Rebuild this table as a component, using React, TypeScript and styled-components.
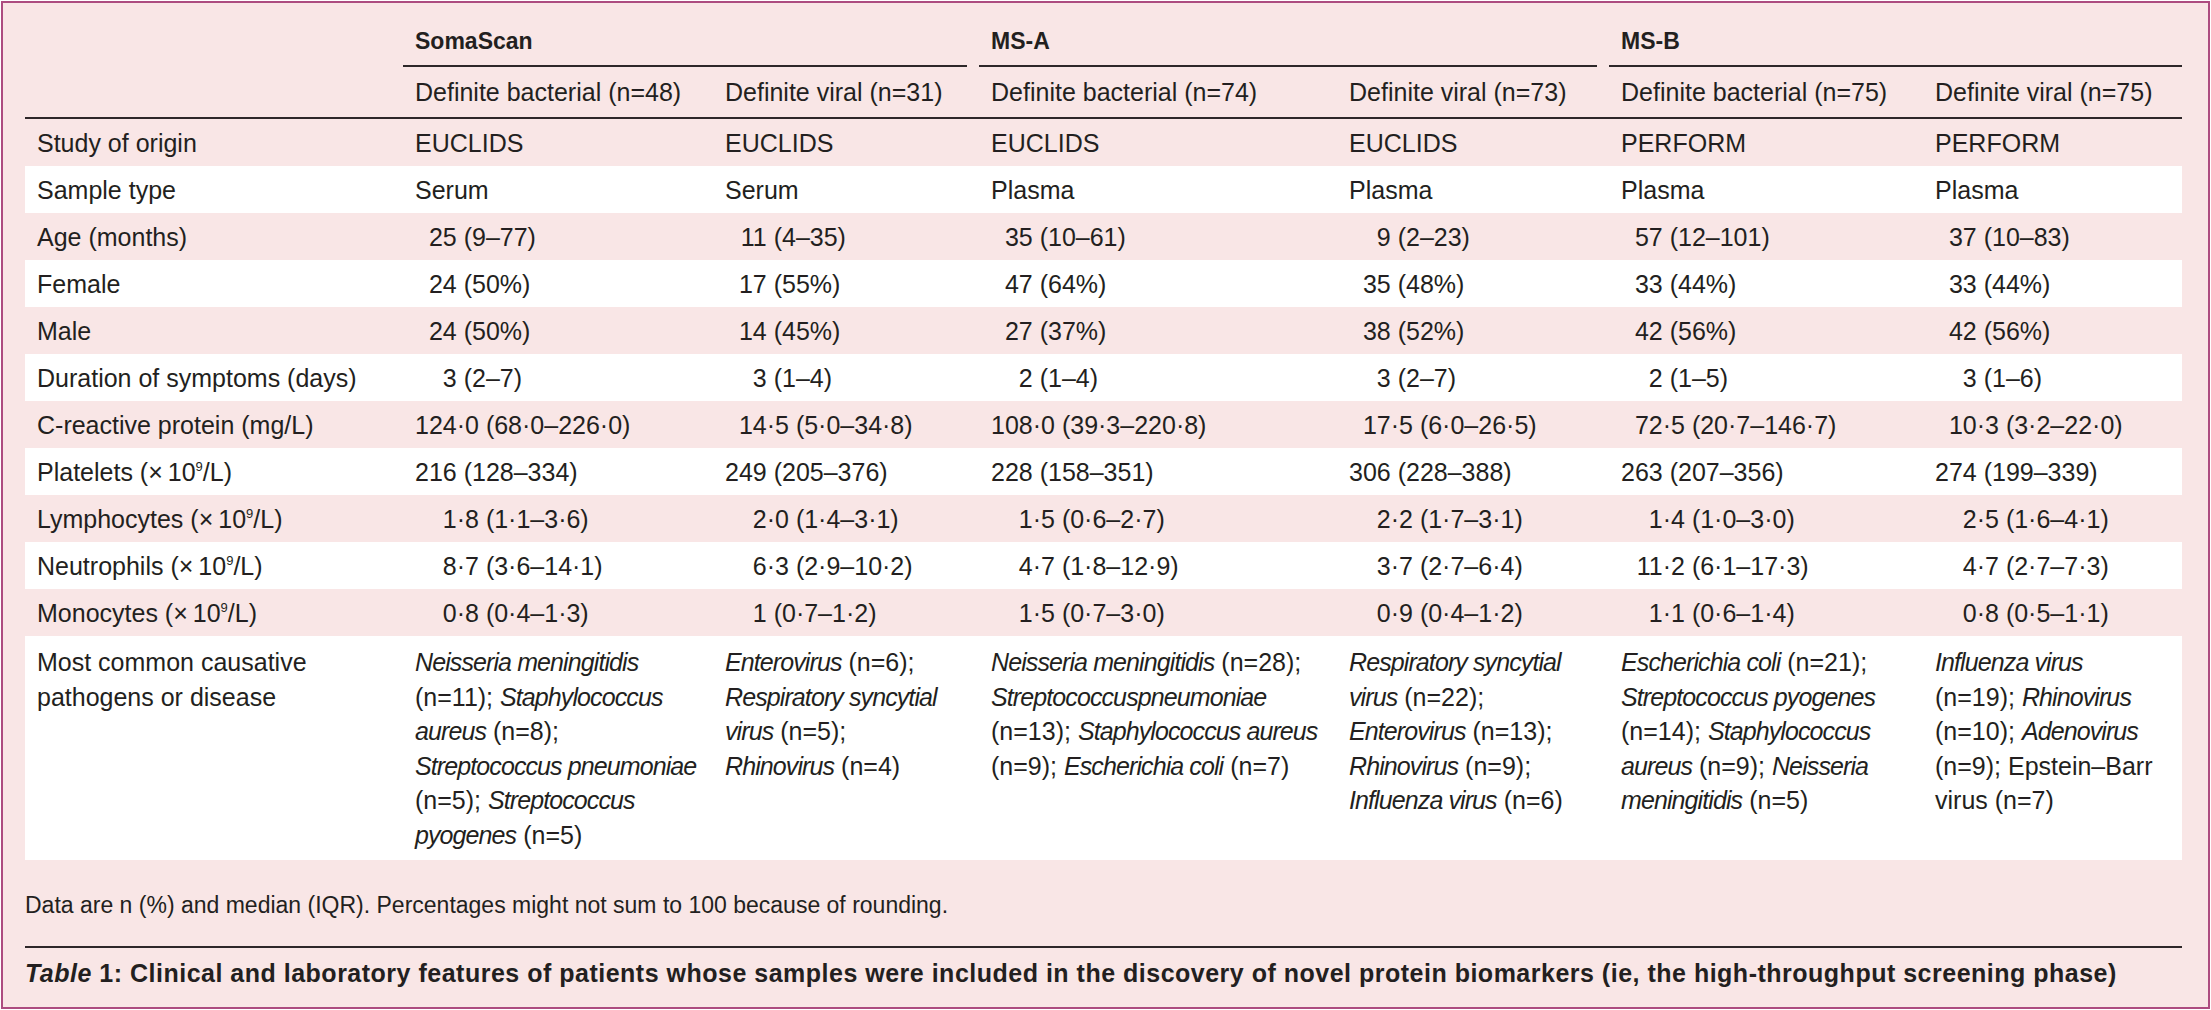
import React from 'react'
import styled, { createGlobalStyle } from 'styled-components'

const GlobalStyle = createGlobalStyle`
  html, body {
    margin: 0;
    padding: 0;
    background: #ffffff;
  }
  body {
    font-family: "Liberation Sans", Arial, sans-serif;
    color: #231f20;
  }
`

const Frame = styled.div`
  box-sizing: border-box;
  width: 2209px;
  height: 1008px;
  margin: 1px;
  padding: 23px 26px 0 22px;
  border: 2px solid #ad4c80;
  background: #f9e6e6;
  display: flex;
  flex-direction: column;
`

const Table = styled.table`
  width: 2157px;
  table-layout: fixed;
  border-collapse: collapse;
  border-spacing: 0;
  font-family: "Liberation Sans", Arial, sans-serif;
  font-size: 25px;
  line-height: 30px;
  color: #231f20;
`

const GroupCell = styled.th`
  padding: 0;
  vertical-align: bottom;
  text-align: left;
`

const GroupLabel = styled.div<{ $gap: boolean }>`
  padding: 0 12px 9px;
  margin-right: ${p => (p.$gap ? '12px' : '0')};
  border-bottom: 2px solid #2e2729;
  font-size: 23px;
  font-weight: 700;
  line-height: 30px;
`

const CohortCell = styled.th`
  height: 50px;
  padding: 0 12px;
  text-align: left;
  vertical-align: middle;
  font-weight: 400;
  white-space: nowrap;
  border-bottom: 2px solid #2e2729;
`

const BodyRow = styled.tr<{ $white: boolean }>`
  background: ${p => (p.$white ? '#ffffff' : 'transparent')};
`

const Cell = styled.td<{ $top?: boolean }>`
  height: ${p => (p.$top ? 'auto' : '47px')};
  padding: ${p => (p.$top ? '9px 12px 8px' : '0 12px')};
  vertical-align: ${p => (p.$top ? 'top' : 'middle')};
  line-height: ${p => (p.$top ? '34.5px' : '30px')};
  white-space: nowrap;
`

const IntPart = styled.span`
  display: inline-block;
  min-width: 3ch;
  text-align: right;
`

const Sup = styled.sup`
  position: relative;
  top: -10px;
  font-size: 13px;
  line-height: 0;
  vertical-align: baseline;
`

const Line = styled.div`
  display: block;
`

// species names are set in a narrow italic in the printed table
const Sp = styled.i`
  font-style: italic;
  letter-spacing: -0.9px;
`

const Note = styled.p`
  margin: 30px 0 0;
  font-size: 23px;
  line-height: 30px;
`

const Caption = styled.p`
  margin: 26px 0 0;
  padding-top: 10px;
  border-top: 2px solid #2e2729;
  font-size: 25px;
  line-height: 30px;
  font-weight: 700;
  letter-spacing: 0.5px;
  white-space: nowrap;

  em {
    font-style: italic;
  }
`

const groups = [
  { name: 'SomaScan', gap: true },
  { name: 'MS-A', gap: true },
  { name: 'MS-B', gap: false },
]

const cohorts = [
  'Definite bacterial (n=48)',
  'Definite viral (n=31)',
  'Definite bacterial (n=74)',
  'Definite viral (n=73)',
  'Definite bacterial (n=75)',
  'Definite viral (n=75)',
]

const perL = (name: string) => (
  <>
    {name} (×{'\u2009'}10<Sup>9</Sup>/L)
  </>
)

const rows: { label: React.ReactNode; values: string[]; numeric?: boolean }[] = [
  { label: 'Study of origin', values: ['EUCLIDS', 'EUCLIDS', 'EUCLIDS', 'EUCLIDS', 'PERFORM', 'PERFORM'] },
  { label: 'Sample type', values: ['Serum', 'Serum', 'Plasma', 'Plasma', 'Plasma', 'Plasma'] },
  { label: 'Age (months)', numeric: true, values: ['25 (9–77)', '11 (4–35)', '35 (10–61)', '9 (2–23)', '57 (12–101)', '37 (10–83)'] },
  { label: 'Female', numeric: true, values: ['24 (50%)', '17 (55%)', '47 (64%)', '35 (48%)', '33 (44%)', '33 (44%)'] },
  { label: 'Male', numeric: true, values: ['24 (50%)', '14 (45%)', '27 (37%)', '38 (52%)', '42 (56%)', '42 (56%)'] },
  { label: 'Duration of symptoms (days)', numeric: true, values: ['3 (2–7)', '3 (1–4)', '2 (1–4)', '3 (2–7)', '2 (1–5)', '3 (1–6)'] },
  {
    label: 'C-reactive protein (mg/L)',
    numeric: true,
    values: ['124·0 (68·0–226·0)', '14·5 (5·0–34·8)', '108·0 (39·3–220·8)', '17·5 (6·0–26·5)', '72·5 (20·7–146·7)', '10·3 (3·2–22·0)'],
  },
  { label: perL('Platelets'), numeric: true, values: ['216 (128–334)', '249 (205–376)', '228 (158–351)', '306 (228–388)', '263 (207–356)', '274 (199–339)'] },
  { label: perL('Lymphocytes'), numeric: true, values: ['1·8 (1·1–3·6)', '2·0 (1·4–3·1)', '1·5 (0·6–2·7)', '2·2 (1·7–3·1)', '1·4 (1·0–3·0)', '2·5 (1·6–4·1)'] },
  { label: perL('Neutrophils'), numeric: true, values: ['8·7 (3·6–14·1)', '6·3 (2·9–10·2)', '4·7 (1·8–12·9)', '3·7 (2·7–6·4)', '11·2 (6·1–17·3)', '4·7 (2·7–7·3)'] },
  { label: perL('Monocytes'), numeric: true, values: ['0·8 (0·4–1·3)', '1 (0·7–1·2)', '1·5 (0·7–3·0)', '0·9 (0·4–1·2)', '1·1 (0·6–1·4)', '0·8 (0·5–1·1)'] },
]

// each entry is one printed line of the pathogen cell
const pathogens: React.ReactNode[][] = [
  [
    <Sp>Neisseria meningitidis</Sp>,
    <>(n=11); <Sp>Staphylococcus</Sp></>,
    <><Sp>aureus</Sp> (n=8);</>,
    <Sp>Streptococcus pneumoniae</Sp>,
    <>(n=5); <Sp>Streptococcus</Sp></>,
    <><Sp>pyogenes</Sp> (n=5)</>,
  ],
  [
    <><Sp>Enterovirus</Sp> (n=6);</>,
    <Sp>Respiratory syncytial</Sp>,
    <><Sp>virus</Sp> (n=5);</>,
    <><Sp>Rhinovirus</Sp> (n=4)</>,
  ],
  [
    <><Sp>Neisseria meningitidis</Sp> (n=28);</>,
    <Sp>Streptococcuspneumoniae</Sp>,
    <>(n=13); <Sp>Staphylococcus aureus</Sp></>,
    <>(n=9); <Sp>Escherichia coli</Sp> (n=7)</>,
  ],
  [
    <Sp>Respiratory syncytial</Sp>,
    <><Sp>virus</Sp> (n=22);</>,
    <><Sp>Enterovirus</Sp> (n=13);</>,
    <><Sp>Rhinovirus</Sp> (n=9);</>,
    <><Sp>Influenza virus</Sp> (n=6)</>,
  ],
  [
    <><Sp>Escherichia coli</Sp> (n=21);</>,
    <Sp>Streptococcus pyogenes</Sp>,
    <>(n=14); <Sp>Staphylococcus</Sp></>,
    <><Sp>aureus</Sp> (n=9); <Sp>Neisseria</Sp></>,
    <><Sp>meningitidis</Sp> (n=5)</>,
  ],
  [
    <Sp>Influenza virus</Sp>,
    <>(n=19); <Sp>Rhinovirus</Sp></>,
    <>(n=10); <Sp>Adenovirus</Sp></>,
    <>(n=9); Epstein–Barr</>,
    <>virus (n=7)</>,
  ],
]

const colWidths = [378, 310, 266, 358, 272, 314, 259]

function Figure({ value }: { value: string }) {
  const m = value.match(/^(\d+)(.*)$/)
  if (!m) return <>{value}</>
  return (
    <>
      <IntPart>{m[1]}</IntPart>
      {m[2]}
    </>
  )
}

export default function App() {
  return (
    <>
      <GlobalStyle />
      <Frame>
        <Table>
          <colgroup>
            {colWidths.map((w, i) => (
              <col key={i} style={{ width: w }} />
            ))}
          </colgroup>
          <thead>
            <tr>
              <GroupCell />
              {groups.map(g => (
                <GroupCell key={g.name} colSpan={2}>
                  <GroupLabel $gap={g.gap}>{g.name}</GroupLabel>
                </GroupCell>
              ))}
            </tr>
            <tr>
              <CohortCell />
              {cohorts.map((c, i) => (
                <CohortCell key={i}>{c}</CohortCell>
              ))}
            </tr>
          </thead>
          <tbody>
            {rows.map((row, r) => (
              <BodyRow key={r} $white={r % 2 === 1}>
                <Cell>{row.label}</Cell>
                {row.values.map((v, i) => (
                  <Cell key={i}>{row.numeric ? <Figure value={v} /> : v}</Cell>
                ))}
              </BodyRow>
            ))}
            <BodyRow $white>
              <Cell $top>
                <Line>Most common causative</Line>
                <Line>pathogens or disease</Line>
              </Cell>
              {pathogens.map((lines, i) => (
                <Cell $top key={i}>
                  {lines.map((l, j) => (
                    <Line key={j}>{l}</Line>
                  ))}
                </Cell>
              ))}
            </BodyRow>
          </tbody>
        </Table>
        <Note>Data are n (%) and median (IQR). Percentages might not sum to 100 because of rounding.</Note>
        <Caption>
          <em>Table</em> 1: Clinical and laboratory features of patients whose samples were included in the discovery of
          novel protein biomarkers (ie, the high-throughput screening phase)
        </Caption>
      </Frame>
    </>
  )
}
